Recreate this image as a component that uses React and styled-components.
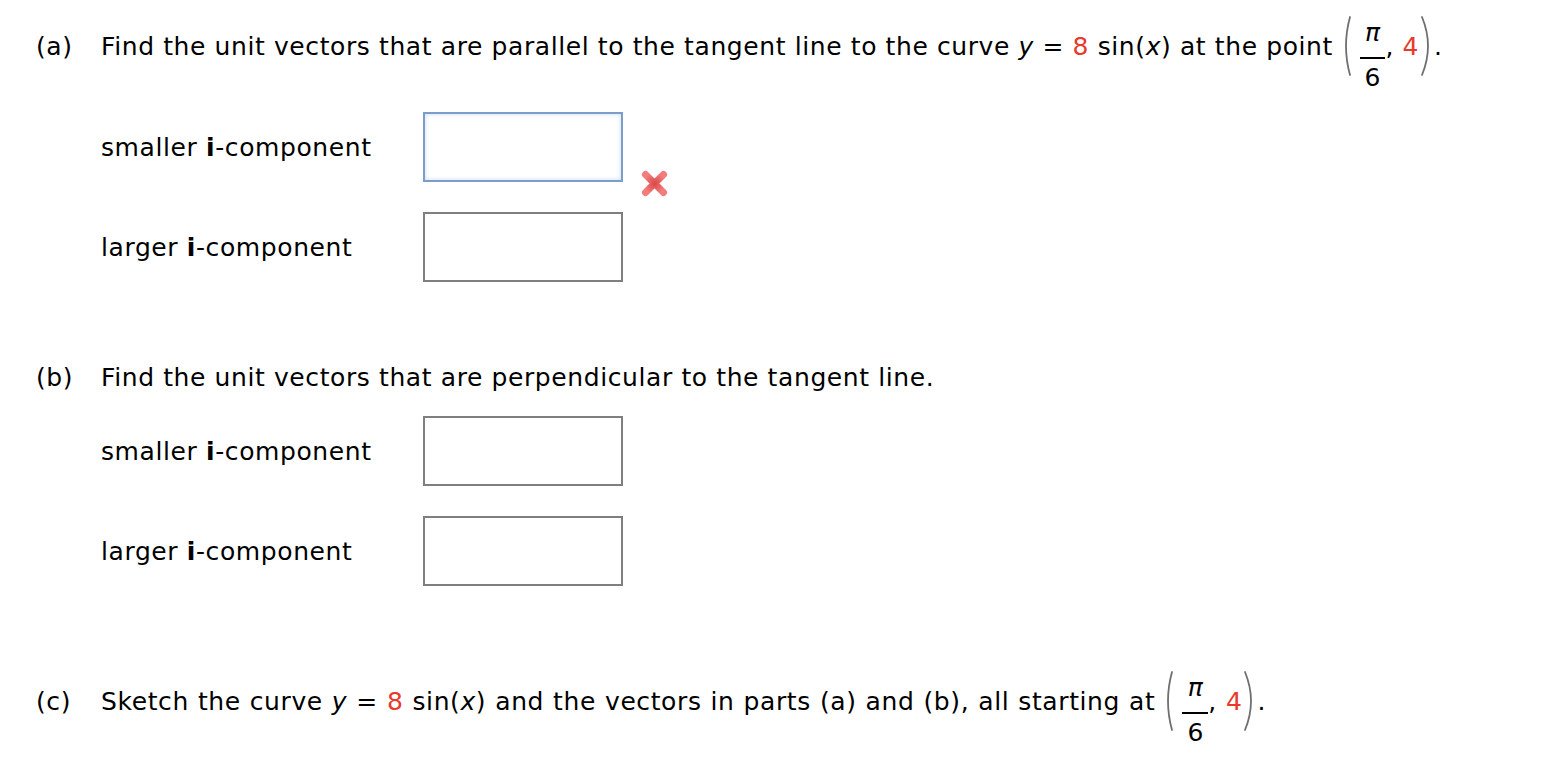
import React from "react";
import styled, { createGlobalStyle } from "styled-components";

const Global = createGlobalStyle`
  html, body { margin: 0; padding: 0; background: #fff; }
  body { font-family: "DejaVu Sans", Verdana, sans-serif; color: #000; }
`;

const Page = styled.div`
  padding: 32px 0 40px 36px;
  font-size: 25px;
  letter-spacing: 0.6px;
`;

const Question = styled.div`
  display: flex;
  align-items: center;
  height: 30px;
  margin-top: ${(p) => p.$mt || 0}px;
`;

const Letter = styled.span`
  width: 65px;
  flex: none;
  line-height: 30px;
`;

const QText = styled.span`
  display: block;
  line-height: 30px;
  white-space: nowrap;
  word-spacing: ${(p) => p.$ws || 0}px;
`;

const Red = styled.span`
  color: #e8392c;
`;

const Var = styled.i`
  font-style: italic;
`;

const Paren = styled.svg`
  display: inline-block;
  width: ${(p) => (p.$right ? 12 : 10)}px;
  height: 60px;
  vertical-align: -6px;
  margin: -16px ${(p) => (p.$right ? 3 : 0)}px -15px 0;
`;

const Frac = styled.span`
  display: inline-block;
  vertical-align: -31px;
  margin: -12px 0 -29px 8px;
  text-align: center;
  letter-spacing: 0;
  word-spacing: 0;
`;

const Num = styled.span`
  display: block;
  font-style: italic;
  font-size: 25px;
  line-height: 24px;
  padding-bottom: 12px;
`;

const Den = styled.span`
  display: block;
  font-size: 25px;
  line-height: 25px;
  border-top: 2px solid #000;
  padding: 6px 5px 0;
`;

const AnswerRow = styled.div`
  display: flex;
  align-items: center;
  padding-left: 65px;
  height: 70px;
  margin-top: ${(p) => p.$mt || 0}px;
`;

const Label = styled.span`
  width: 322px;
  flex: none;
`;

const AnswerBox = styled.div`
  width: 200px;
  height: 70px;
  box-sizing: border-box;
  border: 2px solid ${(p) => (p.$focus ? "#7b9dc8" : "#7f7f7f")};
  box-shadow: ${(p) => (p.$focus ? "inset 0 0 5px #c9dcf2" : "none")};
  background: #fff;
  flex: none;
`;

const WrongMark = styled.svg`
  width: 31px;
  height: 31px;
  align-self: flex-start;
  margin: 56px 0 0 16px;
  flex: none;
`;

function ParenShape({ right }) {
  return (
    <Paren $right={right} viewBox={right ? "0 0 12 60" : "0 0 10 60"}>
      <path
        d={right ? "M3 1 Q15 30 3 59" : "M8 1 Q0 30 8 59"}
        fill="none"
        stroke="#6f6f6f"
        strokeWidth="1.8"
        strokeLinecap="round"
      />
    </Paren>
  );
}

function Point() {
  return (
    <>
      {" "}
      <ParenShape />
      <Frac>
        <Num>π</Num>
        <Den>6</Den>
      </Frac>
      , <Red>4</Red>
      <ParenShape right />.
    </>
  );
}

function Comp({ which }) {
  return (
    <Label>
      {which} <b>i</b>-component
    </Label>
  );
}

export default function App() {
  return (
    <>
      <Global />
      <Page>
        <Question>
          <Letter>(a)</Letter>
          <QText>
            Find the unit vectors that are parallel to the tangent line to the curve{" "}
            <Var>y</Var> = <Red>8</Red> sin(<Var>x</Var>) at the point
            <Point />
          </QText>
        </Question>

        <AnswerRow $mt={50}>
          <Comp which="smaller" />
          <AnswerBox $focus />
          <WrongMark viewBox="0 0 31 31">
            <defs>
              <radialGradient id="xg" cx="50%" cy="50%" r="60%">
                <stop offset="0%" stopColor="#d63535" />
                <stop offset="100%" stopColor="#f07070" />
              </radialGradient>
            </defs>
            <path
              d="M6.5 6.5 L24.5 24.5 M24.5 6.5 L6.5 24.5"
              stroke="url(#xg)"
              strokeWidth="7"
              strokeLinecap="round"
              opacity="0.9"
            />
          </WrongMark>
        </AnswerRow>
        <AnswerRow $mt={30}>
          <Comp which="larger" />
          <AnswerBox />
        </AnswerRow>

        <Question $mt={81}>
          <Letter>(b)</Letter>
          <QText>Find the unit vectors that are perpendicular to the tangent line.</QText>
        </Question>

        <AnswerRow $mt={23}>
          <Comp which="smaller" />
          <AnswerBox />
        </AnswerRow>
        <AnswerRow $mt={30}>
          <Comp which="larger" />
          <AnswerBox />
        </AnswerRow>

        <Question $mt={101}>
          <Letter>(c)</Letter>
          <QText $ws={0.5}>
            Sketch the curve <Var>y</Var> = <Red>8</Red> sin(<Var>x</Var>) and the vectors in
            parts (a) and (b), all starting at
            <Point />
          </QText>
        </Question>
      </Page>
    </>
  );
}
